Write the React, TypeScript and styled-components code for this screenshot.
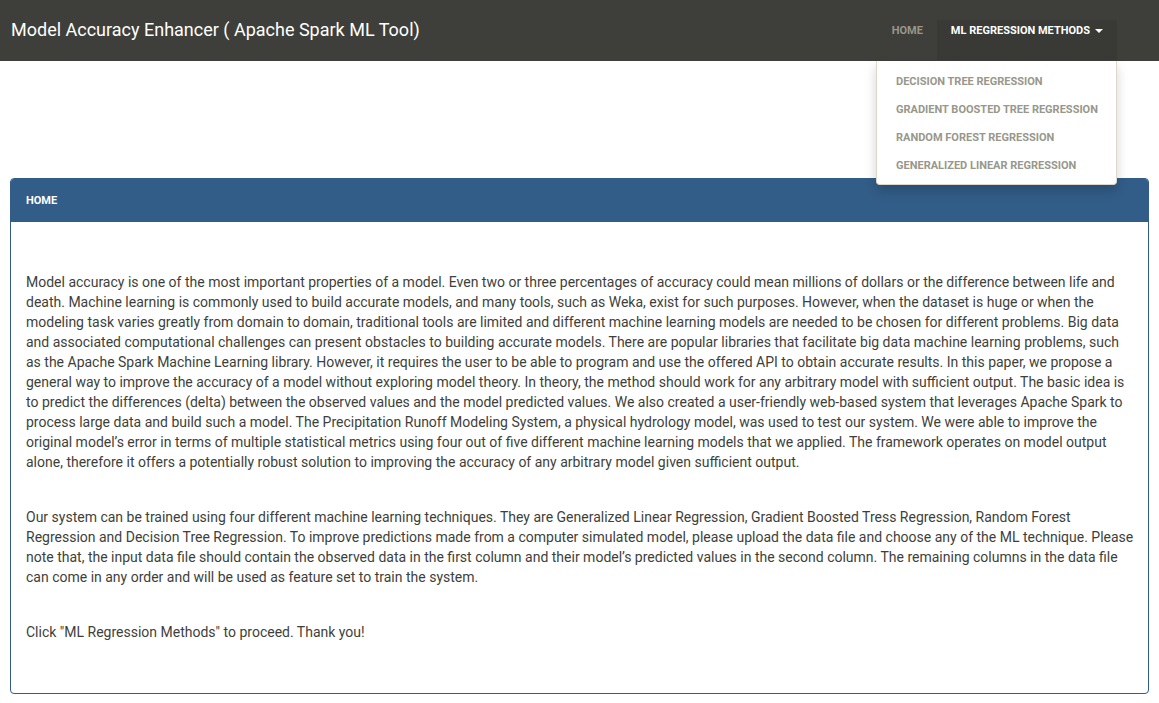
import React from "react";
import styled, { createGlobalStyle } from "styled-components";

const Global = createGlobalStyle`
  html, body { margin: 0; padding: 0; background: #fff; }
  body { font-family: Roboto, "Helvetica Neue", Arial, sans-serif; font-size: 14px; line-height: 20px; color: #3e3f3a; }
  * { box-sizing: border-box; }
`;

const Navbar = styled.header`
  height: 61px;
  background: #3e3f3a;
  border-bottom: 1px solid #3e3f3a;
  display: flex;
  align-items: stretch;
  justify-content: space-between;
  padding: 0 42px 0 11px;
`;

const Brand = styled.div`
  color: #fff;
  font-size: 18px;
  display: flex;
  align-items: center;
  height: 59px;
`;

const NavList = styled.ul`
  list-style: none;
  margin: 0;
  padding: 20px 0 0;
  display: flex;
  align-items: stretch;
`;

const NavItem = styled.li`
  position: relative;
  display: flex;
`;

const NavLink = styled.a<{ $open?: boolean }>`
  display: flex;
  align-items: flex-start;
  gap: 5px;
  padding: 1px 14px 0;
  height: 40px;
  font-size: 11px;
  font-weight: 700;
  text-transform: uppercase;
  text-decoration: none;
  color: ${(p) => (p.$open ? "#fff" : "#98978b")};
  background: ${(p) => (p.$open ? "#393a35" : "transparent")};
  cursor: pointer;
`;

const Caret = styled.span`
  display: inline-block;
  width: 0;
  height: 0;
  margin-top: 8px;
  border-top: 4px solid currentColor;
  border-left: 4px solid transparent;
  border-right: 4px solid transparent;
`;

const Menu = styled.ul`
  position: absolute;
  top: 41px;
  right: 0;
  width: 241px;
  margin: 0;
  padding: 7px 0 4px;
  list-style: none;
  background: #fff;
  border: 1px solid #dfd7ca;
  border-top: none;
  border-radius: 0 0 4px 4px;
  box-shadow: 0 6px 12px rgba(0, 0, 0, 0.175);
  z-index: 10;
`;

const MenuItem = styled.li`
  height: 28px;
  display: flex;
  align-items: center;
  padding: 0 19px;
  font-size: 11px;
  font-weight: 700;
  text-transform: uppercase;
  color: #98978b;
  white-space: nowrap;
`;

const Main = styled.main`
  padding: 117px 10px 10px;
`;

const Panel = styled.section`
  border: 1px solid #325d88;
  border-radius: 4px;
  overflow: hidden;
`;

const PanelHeading = styled.div`
  background: #325d88;
  color: #fff;
  height: 43px;
  display: flex;
  align-items: center;
  padding: 0 15px;
  font-size: 11px;
  font-weight: 700;
  text-transform: uppercase;
`;

const PanelBody = styled.div`
  padding: 50px 12px 51px 15px;
  display: flex;
  flex-direction: column;
  gap: 35px;
`;

const Para = styled.p`
  margin: 0;
`;

export default function App() {
  return (
    <>
      <Global />
      <Navbar>
        <Brand>Model Accuracy Enhancer ( Apache Spark ML Tool)</Brand>
        <NavList>
          <NavItem>
            <NavLink>Home</NavLink>
          </NavItem>
          <NavItem>
            <NavLink $open>
              ML Regression Methods <Caret />
            </NavLink>
            <Menu>
              <MenuItem>Decision Tree Regression</MenuItem>
              <MenuItem>Gradient Boosted Tree Regression</MenuItem>
              <MenuItem>Random Forest Regression</MenuItem>
              <MenuItem>Generalized Linear Regression</MenuItem>
            </Menu>
          </NavItem>
        </NavList>
      </Navbar>
      <Main>
        <Panel>
          <PanelHeading>Home</PanelHeading>
          <PanelBody>
            <Para>
              Model accuracy is one of the most important properties of a model. Even two or three percentages of accuracy could mean millions of dollars or the difference between life and death. Machine learning is commonly used to build accurate models, and many tools, such as Weka, exist for such purposes. However, when the dataset is huge or when the modeling task varies greatly from domain to domain, traditional tools are limited and different machine learning models are needed to be chosen for different problems. Big data and associated computational challenges can present obstacles to building accurate models. There are popular libraries that facilitate big data machine learning problems, such as the Apache Spark Machine Learning library. However, it requires the user to be able to program and use the offered API to obtain accurate results. In this paper, we propose a general way to improve the accuracy of a model without exploring model theory. In theory, the method should work for any arbitrary model with sufficient output. The basic idea is to predict the differences (delta) between the observed values and the model predicted values. We also created a user-friendly web-based system that leverages Apache Spark to process large data and build such a model. The Precipitation Runoff Modeling System, a physical hydrology model, was used to test our system. We were able to improve the original model’s error in terms of multiple statistical metrics using four out of five different machine learning models that we applied. The framework operates on model output alone, therefore it offers a potentially robust solution to improving the accuracy of any arbitrary model given sufficient output.
            </Para>
            <Para>
              Our system can be trained using four different machine learning techniques. They are Generalized Linear Regression, Gradient Boosted Tress Regression, Random Forest Regression and Decision Tree Regression. To improve predictions made from a computer simulated model, please upload the data file and choose any of the ML technique. Please note that, the input data file should contain the observed data in the first column and their model’s predicted values in the second column. The remaining columns in the data file can come in any order and will be used as feature set to train the system.
            </Para>
            <Para>Click "ML Regression Methods" to proceed. Thank you!</Para>
          </PanelBody>
        </Panel>
      </Main>
    </>
  );
}
